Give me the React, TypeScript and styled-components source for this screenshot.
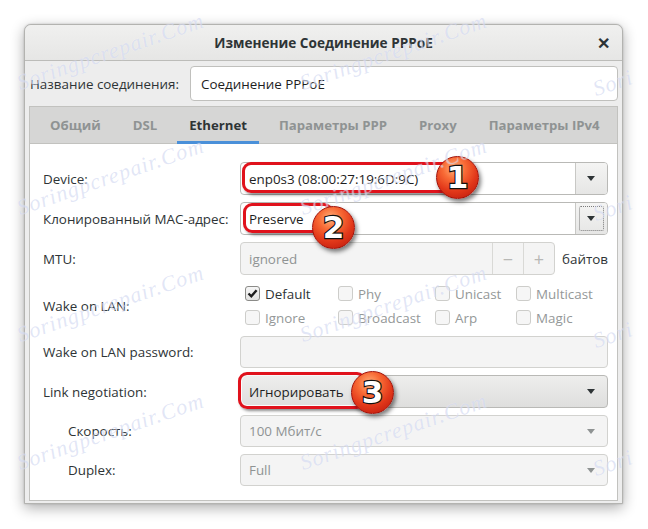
import React from "react";
import styled, { createGlobalStyle } from "styled-components";

const GlobalStyle = createGlobalStyle`
  html, body { margin: 0; padding: 0; background: #ffffff; }
  body { font-family: "Open Sans", "Noto Sans", sans-serif; font-size: 13.4px; color: #2e3436; }
  * { box-sizing: border-box; }
`;

const Page = styled.div`
  position: relative;
  width: 648px;
  height: 529px;
  padding: 24px 25px 0 24px;
  overflow: hidden;
`;

const Window = styled.div`
  width: 599px;
  background: #ededed;
  border: 1px solid #b3b3b0;
  border-radius: 7px 7px 0 0;
  box-shadow: 0 4px 14px rgba(0, 0, 0, 0.32), 0 0 2px rgba(0, 0, 0, 0.2);
`;

const TitleBar = styled.div`
  height: 36px;
  display: grid;
  grid-template-columns: 40px 1fr 40px;
  align-items: center;
  background: linear-gradient(#f0f0ef, #e6e6e5);
  border-bottom: 1px solid #bcbcb9;
  border-radius: 7px 7px 0 0;
`;

const Title = styled.div`
  grid-column: 2;
  text-align: center;
  font-weight: 700;
  font-size: 13.6px;
  color: #2e3436;
`;

const Close = styled.div`
  grid-column: 3;
  font-weight: 700;
  font-size: 16px;
  color: #2e3436;
  text-align: center;
  line-height: 1;
  padding-left: 2px;
`;

const Body = styled.div`
  padding: 5px 4px 2px 4px;
`;

const NameRow = styled.div`
  display: flex;
  align-items: center;
  height: 35px;
`;

const NameLabel = styled.div`
  width: 161px;
  padding-left: 1px;
  color: #2e3436;
  white-space: nowrap;
`;

const TextEntry = styled.div`
  flex: 1;
  height: 35px;
  display: flex;
  align-items: center;
  padding: 0 10px;
  background: #ffffff;
  border: 1px solid #c0c0bd;
  border-radius: 4px;
  color: #1e1e1e;
`;

const Notebook = styled.div`
  margin-top: 5px;
  border: 1px solid #c2c2bf;
  background: #ffffff;
`;

const TabBar = styled.div`
  display: flex;
  height: 37px;
  padding-left: 4px;
  background: #d6d6d5;
  border-bottom: 1px solid #c2c2bf;
`;

const Tab = styled.div<{ $active?: boolean }>`
  position: relative;
  display: flex;
  align-items: center;
  padding: 0 16px;
  font-weight: 700;
  font-size: 13.2px;
  white-space: nowrap;
  color: ${(p) => (p.$active ? "#2e3436" : "#8f9393")};
  &::after {
    content: "";
    display: ${(p) => (p.$active ? "block" : "none")};
    position: absolute;
    left: 4px;
    right: 4px;
    bottom: -1px;
    height: 3px;
    background: #4a90d9;
  }
`;

const Content = styled.div`
  display: grid;
  grid-template-columns: 198px 1fr;
  row-gap: 7px;
  padding: 18px 12px 14px 12px;
`;

const Label = styled.div<{ $indent?: boolean }>`
  display: flex;
  align-items: center;
  padding-left: ${(p) => (p.$indent ? "26px" : "1px")};
  color: #2e3436;
  white-space: nowrap;
`;

const Field = styled.div<{ $h?: number }>`
  position: relative;
  height: ${(p) => p.$h ?? 33}px;
  display: flex;
  align-items: center;
`;

const Combo = styled.div<{ $kind: "entry" | "button" | "disabled" }>`
  flex: 1;
  height: 100%;
  display: flex;
  align-items: stretch;
  border: 1px solid ${(p) => (p.$kind === "disabled" ? "#d2d2cf" : "#b9b9b6")};
  border-radius: 4px;
  overflow: hidden;
  background: ${(p) =>
    p.$kind === "button"
      ? "linear-gradient(#eeeeed, #dededd)"
      : p.$kind === "disabled"
      ? "#f4f4f4"
      : "#ffffff"};
  color: ${(p) => (p.$kind === "disabled" ? "#8f9393" : "#1e1e1e")};
`;

const ComboText = styled.div`
  flex: 1;
  display: flex;
  align-items: center;
  padding-left: 8px;
  white-space: nowrap;
`;

const ComboButton = styled.div<{ $sep?: boolean; $focus?: boolean; $disabled?: boolean }>`
  position: relative;
  width: 32px;
  display: flex;
  align-items: center;
  justify-content: center;
  border-left: ${(p) => (p.$sep ? "1px solid #c8c8c5" : "none")};
  background: ${(p) => (p.$sep ? "linear-gradient(#f4f4f3, #e6e6e5)" : "transparent")};
  &::before {
    content: "";
    display: ${(p) => (p.$focus ? "block" : "none")};
    position: absolute;
    inset: 3px;
    border: 1px dotted #7a7a7a;
    border-radius: 2px;
  }
  &::after {
    content: "";
    width: 0;
    height: 0;
    border-left: 4.5px solid transparent;
    border-right: 4.5px solid transparent;
    border-top: 5px solid ${(p) => (p.$disabled ? "#8f9393" : "#2e3436")};
  }
`;

const Spin = styled.div`
  width: 315px;
  height: 100%;
  display: flex;
  border: 1px solid #d2d2cf;
  border-radius: 4px;
  background: #f4f4f4;
  color: #8f9393;
  overflow: hidden;
`;

const SpinBtn = styled.div`
  width: 31px;
  display: flex;
  align-items: center;
  justify-content: center;
  border-left: 1px solid #d9d9d6;
  color: #b8b8b6;
  font-size: 18px;
`;

const Unit = styled.div`
  margin-left: 7px;
  color: #2e3436;
`;

const Checks = styled.div`
  display: grid;
  grid-template-columns: 93px 97px 81px auto;
  grid-auto-rows: 24px;
  padding-left: 5px;
`;

const Check = styled.div<{ $on?: boolean }>`
  display: flex;
  align-items: center;
  gap: 5px;
  color: ${(p) => (p.$on ? "#2e3436" : "#949898")};
`;

const Box = styled.span<{ $on?: boolean }>`
  width: 15px;
  height: 15px;
  border: 1px solid ${(p) => (p.$on ? "#8b8b88" : "#cdcdca")};
  border-radius: 3px;
  background: ${(p) => (p.$on ? "linear-gradient(#f6f6f6, #e2e2e1)" : "#f6f6f6")};
  display: flex;
  align-items: center;
  justify-content: center;
`;

const Entry = styled.div`
  flex: 1;
  height: 100%;
  border: 1px solid #d2d2cf;
  border-radius: 4px;
  background: #f4f4f4;
`;

const Highlight = styled.div<{ $l: number; $t: number; $w: number; $h: number }>`
  position: absolute;
  left: ${(p) => p.$l}px;
  top: ${(p) => p.$t}px;
  width: ${(p) => p.$w}px;
  height: ${(p) => p.$h}px;
  border: 3px solid #e0121c;
  border-radius: 9px;
  box-shadow: inset 0 0 0 1px rgba(255, 255, 255, 0.9), 2px 2px 3px rgba(0, 0, 0, 0.45);
  pointer-events: none;
  z-index: 2;
`;

const Badge = styled.div<{ $l: number; $t: number }>`
  position: absolute;
  left: ${(p) => p.$l}px;
  top: ${(p) => p.$t}px;
  width: 43px;
  height: 43px;
  border-radius: 50%;
  background: radial-gradient(circle at 42% 28%, #ffb07a 0%, #f86a35 30%, #e2381a 60%, #b5140b 100%);
  border: 1px solid #a0120a;
  box-shadow: 2px 3px 4px rgba(0, 0, 0, 0.5);
  display: flex;
  align-items: center;
  justify-content: center;
  font-family: "DejaVu Sans", "Liberation Sans", sans-serif;
  font-weight: 700;
  font-size: 31px;
  line-height: 1;
  color: #ffffff;
  -webkit-text-stroke: 2.4px #111;
  paint-order: stroke fill;
  z-index: 3;
`;

const Watermarks = styled.div`
  position: absolute;
  inset: 0;
  pointer-events: none;
  z-index: 5;
`;

const Mark = styled.div<{ $x: number; $y: number }>`
  position: absolute;
  left: ${(p) => p.$x}px;
  top: ${(p) => p.$y}px;
  transform: rotate(-19deg);
  transform-origin: left bottom;
  font-family: "Liberation Serif", serif;
  font-style: italic;
  font-size: 22px;
  letter-spacing: 1px;
  color: rgba(165, 178, 228, 0.32);
  text-shadow: 0 0 1px rgba(255, 255, 255, 0.6);
  white-space: nowrap;
`;

const tabs = ["Общий", "DSL", "Ethernet", "Параметры PPP", "Proxy", "Параметры IPv4"];

const Check1 = ({ label, on }: { label: string; on?: boolean }) => (
  <Check $on={on}>
    <Box $on={on}>
      {on && (
        <svg width="11" height="11" viewBox="0 0 11 11">
          <path d="M1.5 5.5 L4.3 8.3 L9.6 2.2" fill="none" stroke="#1e1e1e" strokeWidth="2.4" />
        </svg>
      )}
    </Box>
    {label}
  </Check>
);

const marks: { x: number; y: number; t: string }[] = [];
for (const y of [70, 195, 322, 450]) {
  marks.push({ x: 22, y, t: "Soringpcrepair.Com" });
  marks.push({ x: 305, y, t: "Soringpcrepair.Com" });
  marks.push({ x: 598, y: y + 6, t: "Sori" });
}

export default function App() {
  return (
    <>
      <GlobalStyle />
      <Page>
        <Window>
          <TitleBar>
            <Title>Изменение Соединение PPPoE</Title>
            <Close>✕</Close>
          </TitleBar>
          <Body>
            <NameRow>
              <NameLabel>Название соединения:</NameLabel>
              <TextEntry>Соединение PPPoE</TextEntry>
            </NameRow>
            <Notebook>
              <TabBar>
                {tabs.map((t) => (
                  <Tab key={t} $active={t === "Ethernet"}>
                    {t}
                  </Tab>
                ))}
              </TabBar>
              <Content>
                <Label>Device:</Label>
                <Field>
                  <Combo $kind="entry">
                    <ComboText>enp0s3 (08:00:27:19:6D:9C)</ComboText>
                    <ComboButton $sep />
                  </Combo>
                  <Highlight $l={2} $t={0} $w={210} $h={31} />
                  <Badge $l={196} $t={-6}>1</Badge>
                </Field>

                <Label>Клонированный MAC-адрес:</Label>
                <Field>
                  <Combo $kind="entry">
                    <ComboText>Preserve</ComboText>
                    <ComboButton $sep $focus />
                  </Combo>
                  <Highlight $l={3} $t={1} $w={90} $h={30} />
                  <Badge $l={72} $t={4}>2</Badge>
                </Field>

                <Label>MTU:</Label>
                <Field>
                  <Spin>
                    <ComboText>ignored</ComboText>
                    <SpinBtn>−</SpinBtn>
                    <SpinBtn>+</SpinBtn>
                  </Spin>
                  <Unit>байтов</Unit>
                </Field>

                <Label>Wake on LAN:</Label>
                <Field $h={47}>
                  <Checks>
                    <Check1 label="Default" on />
                    <Check1 label="Phy" />
                    <Check1 label="Unicast" />
                    <Check1 label="Multicast" />
                    <Check1 label="Ignore" />
                    <Check1 label="Broadcast" />
                    <Check1 label="Arp" />
                    <Check1 label="Magic" />
                  </Checks>
                </Field>

                <Label>Wake on LAN password:</Label>
                <Field $h={32}>
                  <Entry />
                </Field>

                <Label>Link negotiation:</Label>
                <Field>
                  <Combo $kind="button">
                    <ComboText>Игнорировать</ComboText>
                    <ComboButton />
                  </Combo>
                  <Highlight $l={-2} $t={-3} $w={128} $h={37} />
                  <Badge $l={111} $t={-4}>3</Badge>
                </Field>

                <Label $indent>Скорость:</Label>
                <Field $h={32}>
                  <Combo $kind="disabled">
                    <ComboText>100 Мбит/с</ComboText>
                    <ComboButton $disabled />
                  </Combo>
                </Field>

                <Label $indent>Duplex:</Label>
                <Field $h={32}>
                  <Combo $kind="disabled">
                    <ComboText>Full</ComboText>
                    <ComboButton $disabled />
                  </Combo>
                </Field>
              </Content>
            </Notebook>
          </Body>
        </Window>
        <Watermarks>
          {marks.map((m, i) => (
            <Mark key={i} $x={m.x} $y={m.y}>
              {m.t}
            </Mark>
          ))}
        </Watermarks>
      </Page>
    </>
  );
}
